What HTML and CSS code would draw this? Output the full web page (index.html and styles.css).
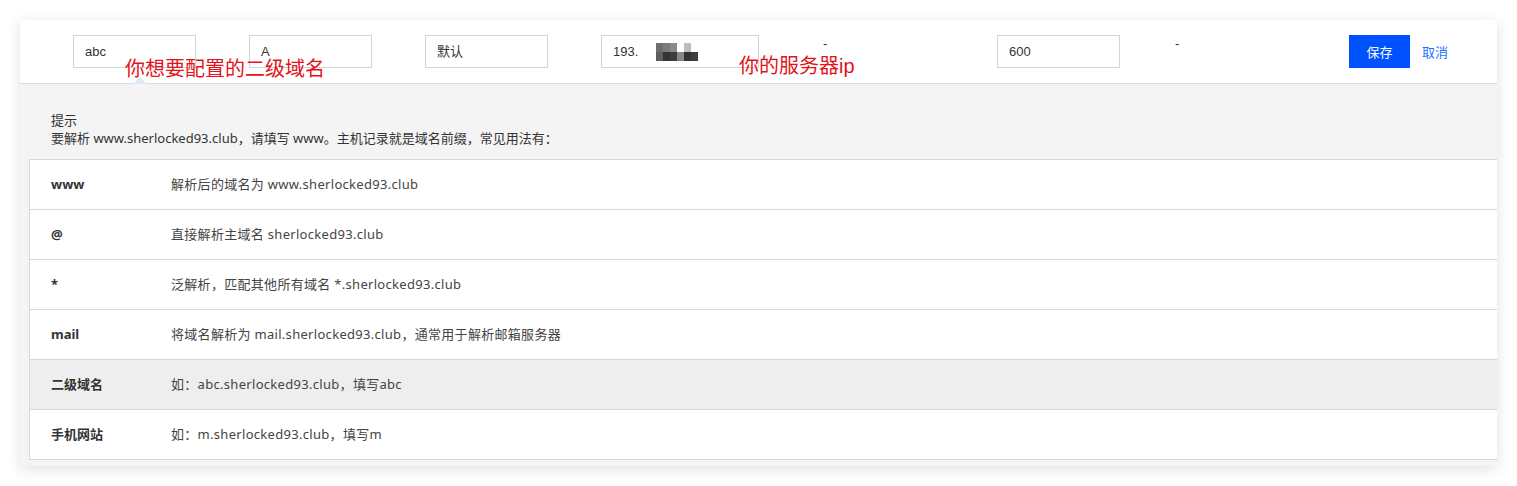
FILE: index.html
```html
<!DOCTYPE html>
<html lang="zh">
<head>
<meta charset="utf-8">
<link rel="stylesheet" href="styles.css">
</head>
<body>
<div class="card">
  <div class="edit-row">
    <div class="cell"><div class="input">abc</div></div>
    <div class="cell"><div class="input">A</div></div>
    <div class="cell"><div class="input">默认</div></div>
    <div class="cell"><div class="input ip">193.<span class="blur">
      <i class="b1"></i><i class="b2"></i><i class="b3"></i><i class="b0"></i><i class="b4"></i><i class="b0"></i>
      <i class="b5"></i><i class="b6"></i><i class="b7"></i><i class="b8"></i><i class="b6"></i><i class="b7"></i>
    </span></div></div>
    <div class="cell dash">-</div>
    <div class="cell"><div class="input">600</div></div>
    <div class="cell dash">-</div>
    <div class="cell actions"><button class="btn-save">保存</button><a class="btn-cancel">取消</a></div>
    <span class="arrow"></span>
    <span class="note note-sub">你想要配置的二级域名</span>
    <span class="note note-ip">你的服务器ip</span>
  </div>
  <div class="tips">
    <div class="tips-title">提示</div>
    <div class="tips-text">要解析 www.sherlocked93.club，请填写 www。主机记录就是域名前缀，常见用法有：</div>
    <div class="table">
      <div class="tr"><div class="th">www</div><div class="td">解析后的域名为 www.sherlocked93.club</div></div>
      <div class="tr"><div class="th">@</div><div class="td">直接解析主域名 sherlocked93.club</div></div>
      <div class="tr"><div class="th">*</div><div class="td">泛解析，匹配其他所有域名 *.sherlocked93.club</div></div>
      <div class="tr"><div class="th">mail</div><div class="td">将域名解析为 mail.sherlocked93.club，通常用于解析邮箱服务器</div></div>
      <div class="tr hl"><div class="th">二级域名</div><div class="td">如：abc.sherlocked93.club，填写abc</div></div>
      <div class="tr"><div class="th">手机网站</div><div class="td">如：m.sherlocked93.club，填写m</div></div>
    </div>
  </div>
</div>
</body>
</html>
```
FILE: styles.css
```css
* { box-sizing: border-box; }
html, body { margin: 0; padding: 0; background: #fff; }
body {
  padding: 20px;
  font-family: "Liberation Sans", "Noto Sans CJK SC", sans-serif;
  font-size: 13px;
  color: #333;
}
.card {
  width: 1477px;
  background: #f4f4f4;
  box-shadow: 0 3px 14px rgba(0,0,0,0.12);
}
.edit-row {
  position: relative;
  height: 64px;
  background: #fff;
  border-bottom: 1px solid #dcdcdc;
  display: grid;
  grid-template-columns: 176px 176px 176px 222px 174px 178px 174px auto;
  padding: 15px 0 0 53px;
  align-items: start;
}
.input {
  width: 123px;
  height: 33px;
  border: 1px solid #d4d4d4;
  padding: 0 11px;
  line-height: 31px;
  color: #333;
  font-size: 13px;
}
.input.ip { width: 158px; display: flex; align-items: center; }
.blur {
  margin-left: 18px;
  display: grid;
  grid-template-columns: repeat(6, 7px);
  grid-template-rows: 9px 9px;
}
.blur i { display: block; }
.b0 { background: #fff; }
.b1 { background: #6e6e6e; }
.b2 { background: #7a7a7a; }
.b3 { background: #8a8a8a; }
.b4 { background: #bdbdbd; }
.b5 { background: #5e5e5e; }
.b6 { background: #333; }
.b7 { background: #3d3d3d; }
.b8 { background: #888; }
.dash { padding-top: 1px; line-height: 16px; color: #333; }
.actions { display: flex; align-items: center; gap: 12px; }
.btn-save {
  width: 61px;
  height: 33px;
  border: 0;
  background: #0052ff;
  color: #fff;
  font-family: inherit;
  font-size: 13px;
  padding: 0;
}
.btn-cancel { color: #1f6fff; font-size: 13px; }
.arrow {
  position: absolute;
  left: 113px;
  top: 57px;
  width: 0; height: 0;
  border-left: 7px solid transparent;
  border-right: 7px solid transparent;
  border-bottom: 7px solid #dde9f7;
}
.note {
  position: absolute;
  color: #e3131b;
  font-size: 20px;
  line-height: 20px;
  white-space: nowrap;
}
.note-sub { left: 105px; top: 39px; }
.note-ip { left: 719px; top: 36px; }
.tips {
  padding: 27px 0 6px 9px;
  font-family: "Noto Sans", "Noto Sans CJK SC", sans-serif;
}
.tips-title, .tips-text { padding-left: 22px; line-height: 18px; color: #333; }
.tips-text { margin-bottom: 12px; }
.table {
  background: #fff;
  border-top: 1px solid #d7d7d7;
  border-left: 1px solid #d7d7d7;
}
.tr {
  display: flex;
  align-items: center;
  height: 50px;
  border-bottom: 1px solid #d7d7d7;
  padding-bottom: 2px;
}
.tr.hl { background: #eeeeee; }
.th { width: 141px; padding-left: 21px; font-weight: bold; color: #333; }
.td { color: #444; letter-spacing: 0.3px; }
```
